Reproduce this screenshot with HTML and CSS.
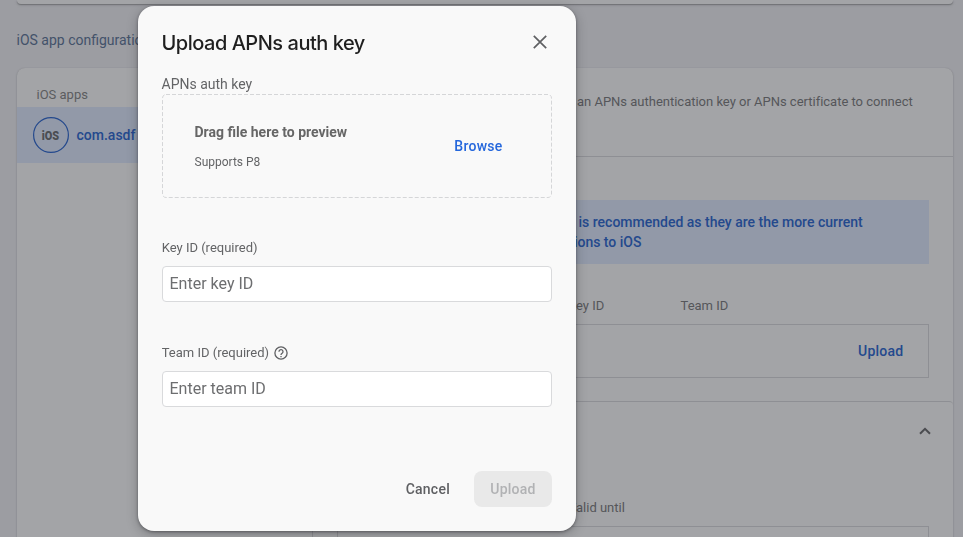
FILE: index.html
```html
<!DOCTYPE html>
<html lang="en">
<head>
<meta charset="utf-8">
<title>Upload APNs auth key</title>
<link rel="stylesheet" href="styles.css">
</head>
<body>
<div class="page">
  <div class="prev-card"></div>
  <h2 class="section-title">iOS app configuration</h2>
  <div class="card">
    <aside class="apps">
      <div class="apps-title">iOS apps</div>
      <div class="app-row">
        <svg class="ios-logo" width="36" height="36" viewBox="0 0 36 36"><circle cx="18" cy="18" r="17.4"/><text x="8.8" y="22.7" textLength="17.4" lengthAdjust="spacingAndGlyphs">iOS</text></svg>
        <span class="app-name">com.asdf</span>
      </div>
    </aside>
    <main class="detail">
      <div class="intro"><p>an APNs authentication key or APNs certificate to connect</p></div>
      <section class="keys">
        <div class="banner"><p>is recommended as they are the more current</p><p class="banner-end">connections to iOS</p></div>
        <div class="columns"><span class="col-key">Key ID</span><span>Team ID</span></div>
        <div class="table"><button class="link">Upload</button></div>
      </section>
      <section class="certs">
        <div class="certs-head"><svg width="12" height="8" viewBox="0 0 12 8"><path d="M1 6.8 6 1.8 11 6.8"/></svg></div>
        <div class="columns certs-columns"><span class="col-valid">Valid until</span></div>
        <div class="table"></div>
      </section>
    </main>
  </div>
</div>
<div class="overlay">
  <div class="dialog">
    <header class="dialog-head">
      <h1>Upload APNs auth key</h1>
      <svg class="close" width="14" height="14" viewBox="0 0 14 14"><path d="M.8.8 13.2 13.2M13.2.8.8 13.2"/></svg>
    </header>
    <div class="file-label">APNs auth key</div>
    <div class="dropzone">
      <svg class="dash" width="390" height="104"><rect x=".5" y=".5" width="389" height="103" rx="3.5"/></svg>
      <div><div class="drop-title">Drag file here to preview</div><div class="drop-sub">Supports P8</div></div>
      <button class="link">Browse</button>
    </div>
    <label class="label key-label">Key ID (required)</label>
    <input class="field" placeholder="Enter key ID">
    <label class="label team-label">Team ID (required)
      <svg width="14" height="14" viewBox="0 0 14 14"><circle cx="7" cy="7" r="6.1"/><path d="M5 5.7a2 2 0 1 1 3.3 1.4C7.5 7.7 7 8 7 8.9"/><path d="M7 9.9v1.3"/></svg>
    </label>
    <input class="field" placeholder="Enter team ID">
    <footer class="actions"><button class="cancel">Cancel</button><button class="submit" disabled>Upload</button></footer>
  </div>
</div>
</body>
</html>
```
FILE: styles.css
```css
* { box-sizing: border-box; }
body {
  margin: 0;
  height: 537px;
  overflow: hidden;
  background: #9c9da2;
  font-family: Roboto, sans-serif;
  color: #55565a;
}
h1, h2, p { margin: 0; }
button { border: 0; background: none; padding: 0; font: 500 14px/20px Roboto, sans-serif; letter-spacing: .25px; }

.page { height: 537px; overflow: hidden; padding: 0 10px 0 17px; }
.prev-card {
  height: 4px;
  background: #a3a4a7;
  border-radius: 0 0 4px 4px;
  box-shadow: 0 1px 1px #727377, 0 1px 3px #85868a;
}
.section-title {
  margin: 26px 0 0 -.5px;
  height: 38px;
  font: 400 14px/21px Roboto, sans-serif;
  color: #43526a;
}
.card {
  display: flex;
  height: 520px;
  background: #a3a4a7;
  border-radius: 8px 8px 0 0;
  box-shadow: 0 1px 2px #7d7e82, 0 0 1px #85868a;
}
.apps { width: 296px; border-right: 1px solid #8e8f94; }
.apps-title { height: 39px; padding: 18px 19.5px 0; font-size: 13px; line-height: 18px; color: #5b5c5f; }
.app-row { display: flex; align-items: center; gap: 7.5px; height: 56px; padding-left: 16px; background: #9299a8; }
.ios-logo circle { fill: none; stroke: #24498d; stroke-width: 1.2; }
.ios-logo text { font: 900 13.5px Roboto, sans-serif; fill: #4b4d52; }
.app-name { font-size: 14px; font-weight: 500; color: #24498d; }

.detail { flex: 1; }
.intro { height: 89px; padding: 24px 0 0 264px; border-bottom: 1px solid #8e8f94; font-size: 13px; line-height: 20px; letter-spacing: -.01px; white-space: nowrap; }
.keys { height: 244px; padding: 43px 24px 0; }
.banner { height: 64px; padding: 12px 0 12px 241.5px; background: #9299a8; color: #24498d; font-size: 14px; font-weight: 500; line-height: 20px; white-space: nowrap; }
.banner-end { width: 63px; direction: rtl; }
.columns { display: grid; grid-template-columns: 112.5px 1fr; padding: 32px 0 9px 231px; font-size: 13px; line-height: 19px; }
.table { display: flex; justify-content: flex-end; align-items: center; height: 54px; border: 1px solid #8e8f94; padding-right: 24.5px; }
.link { color: #24498d; }
.certs { border-top: 1px solid #8e8f94; border-radius: 4px 4px 0 0; padding: 0 24px; }
.certs-head { display: flex; justify-content: flex-end; align-items: center; height: 58px; margin-right: -2px; }
.certs-head path { fill: none; stroke: #4b4c50; stroke-width: 2; }
.certs-columns { padding-top: 38px; padding-bottom: 9px; }

.overlay { position: fixed; inset: 0; padding: 6px 0 0 138px; }
.dialog {
  width: 438px;
  height: 525px;
  padding: 0 24px 24px;
  display: flex;
  flex-direction: column;
  background: #f9f9f9;
  border-radius: 16px;
  box-shadow: 0 1px 3px rgba(20,20,25,.4), 0 3px 12px rgba(20,20,25,.28);
  color: #636466;
}
.dialog-head { display: flex; justify-content: space-between; align-items: center; padding: 24px 5.5px 0 0; height: 48px; }
.dialog-head h1 { padding-top: 2px; margin-left: -.5px; font: 500 20px/24px Inter, sans-serif; letter-spacing: -.48px; color: #1f1f1f; }
.close path { stroke: #5f6063; stroke-width: 1.7; }
.file-label { margin: 20px 0 0 -.5px; height: 20px; font-size: 14px; line-height: 20px; }
.dropzone { position: relative; display: flex; justify-content: space-between; align-items: center; height: 104px; padding: 0 49.5px 0 32.5px; }
.dash { position: absolute; inset: 0; fill: none; stroke: #d5d6d8; stroke-dasharray: 4 2; }
.drop-title { font-size: 14px; font-weight: 700; line-height: 20px; margin-top: 2px; color: #666; }
.drop-sub { margin-top: 10px; font-size: 12px; line-height: 20px; }
.dropzone .link { color: #2567dc; }
.label { display: flex; align-items: center; gap: 5px; font-size: 13px; line-height: 20px; margin-left: -.3px; }
.key-label { margin-top: 40px; }
.team-label { margin-top: 41px; }
.label svg { fill: none; stroke: #5f6063; stroke-width: 1.3; }
.field { margin-top: 8px; height: 36px; padding: 0 6.5px 2px; border: 1px solid #d9dadc; border-radius: 4px; background: #fff; font: 400 16px Roboto, sans-serif; }
.field::placeholder { color: #6d6e70; opacity: 1; }
.actions { display: flex; justify-content: flex-end; gap: 24px; margin-top: auto; }
.cancel { color: #5f6063; }
.submit { width: 78px; height: 36px; border-radius: 8px; background: #e9e9e9; color: #b1b2b4; }
```
